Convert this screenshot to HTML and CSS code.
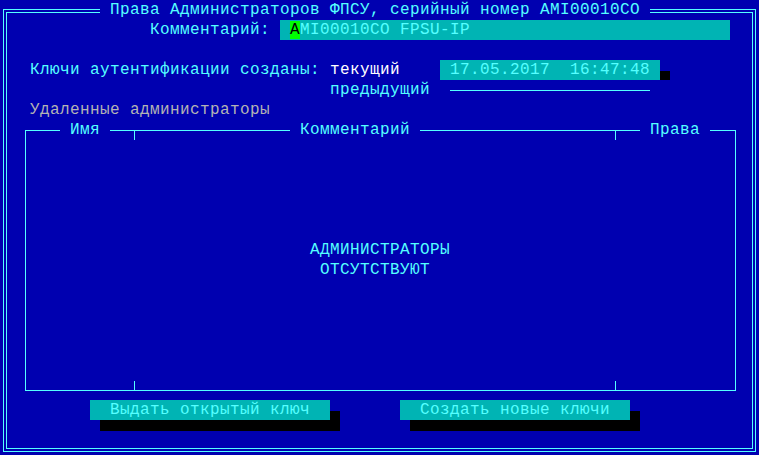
FILE: index.html
```html
<!DOCTYPE html>
<html lang="ru">
<head>
<meta charset="utf-8">
<title>Права Администраторов ФПСУ</title>
<link rel="stylesheet" href="styles.css">
</head>
<body>
<div class="screen">
  <div class="row title-row"><span class="title"> Права Администраторов ФПСУ, серийный номер AMI00010CO </span></div>
  <div class="row comment-row"><span class="label">Комментарий: </span><span class="field comment-field"> <span class="cursor">A</span>MI00010CO FPSU-IP</span></div>
  <div class="row"></div>
  <div class="row keys-row"><span class="label">Ключи аутентификации созданы: </span><span class="white">текущий</span><span class="field date-field"> 17.05.2017  16:47:48 </span><span class="mini-shadow"></span></div>
  <div class="row prev-row"><span class="label">предыдущий</span><span class="hline"></span></div>
  <div class="row removed-row"><span class="gray">Удаленные администраторы</span></div>
  <div class="table">
    <div class="thead">
      <span class="th th-name"> Имя </span>
      <span class="th th-comment"> Комментарий </span>
      <span class="th th-rights"> Права </span>
    </div>
    <span class="tick tick-top tick-a"></span>
    <span class="tick tick-top tick-b"></span>
    <span class="tick tick-bottom tick-a"></span>
    <span class="tick tick-bottom tick-b"></span>
    <div class="empty">
      <div class="empty-line1">АДМИНИСТРАТОРЫ</div>
      <div class="empty-line2">ОТСУТСТВУЮТ</div>
    </div>
  </div>
  <div class="buttons">
    <span class="button btn-issue">Выдать открытый ключ</span>
    <span class="button btn-create">Создать новые ключи</span>
  </div>
</div>
</body>
</html>
```
FILE: styles.css
```css
html, body {
  margin: 0;
  padding: 0;
  background: #0000b0;
}
.screen {
  position: relative;
  z-index: 0;
  width: 759px;
  height: 455px;
  overflow: hidden;
  background: #0000b0;
  color: #55ffff;
  font-family: "Liberation Mono", "DejaVu Sans Mono", monospace;
  font-size: 16px;
  letter-spacing: 0.4px;
  line-height: 20px;
}
.screen span,
.empty div {
  white-space: pre;
}
.screen::before,
.screen::after {
  content: "";
  position: absolute;
  z-index: -1;
  box-sizing: border-box;
  border: 1px solid #55ffff;
}
.screen::before {
  left: 3px;
  top: 9px;
  width: 753px;
  height: 443px;
}
.screen::after {
  left: 6px;
  top: 12px;
  width: 747px;
  height: 437px;
}
.row {
  display: flex;
  height: 20px;
  align-items: stretch;
}
.title-row { padding-left: 100px; }
.title { background: #0000b0; }
.comment-row { padding-left: 150px; }
.field {
  background: #00b4b4;
  color: #55ffff;
}
.comment-field { width: 450px; }
.cursor {
  background: #00ff00;
  color: #000;
}
.keys-row { padding-left: 30px; }
.white { color: #ffffff; }
.date-field {
  margin-left: 40px;
  width: 220px;
}
.mini-shadow {
  align-self: flex-end;
  width: 10px;
  height: 9px;
  background: #000;
}
.prev-row {
  padding-left: 330px;
  align-items: center;
}
.hline {
  margin-left: 20px;
  width: 200px;
  height: 1px;
  background: #55ffff;
}
.removed-row { padding-left: 30px; }
.gray { color: #b4b4b4; }
.table {
  position: relative;
  box-sizing: border-box;
  margin-left: 25px;
  margin-top: 10px;
  width: 711px;
  height: 261px;
  border: 1px solid #55ffff;
}
.thead {
  display: flex;
  height: 20px;
  margin-top: -11px;
}
.th { background: #0000b0; }
.th-name { margin-left: 34px; }
.th-comment { margin-left: 180px; }
.th-rights { margin-left: 220px; }
.tick {
  position: absolute;
  width: 1px;
  height: 10px;
  background: #55ffff;
}
.tick-top { top: -1px; }
.tick-bottom { bottom: -1px; }
.tick-a { left: 108px; }
.tick-b { left: 589px; }
.empty { margin-top: 100px; }
.empty-line1 { padding-left: 284px; }
.empty-line2 { padding-left: 294px; }
.buttons {
  display: flex;
  margin-top: 9px;
  height: 20px;
}
.button {
  background: #00b4b4;
  color: #55ffff;
  padding: 0 20px;
  box-shadow: 10px 11px 0 #000;
}
.btn-issue { margin-left: 90px; }
.btn-create { margin-left: 70px; }
```
